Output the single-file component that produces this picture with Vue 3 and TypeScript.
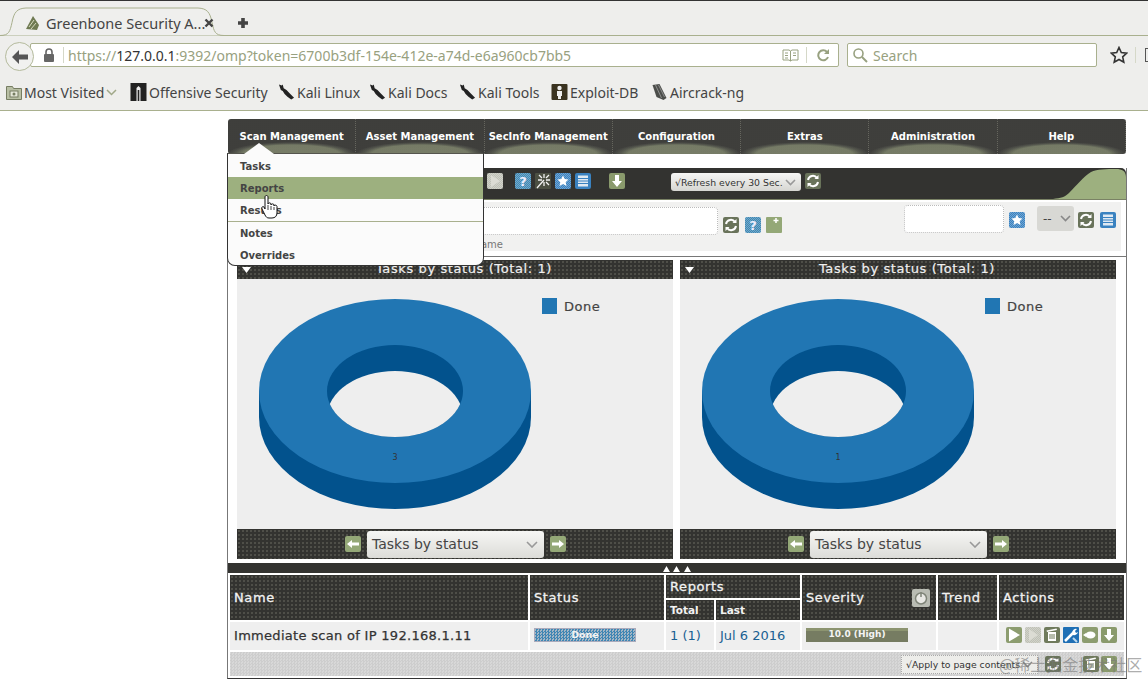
<script setup lang="ts">
const menu = ['Scan Management', 'Asset Management', 'SecInfo Management', 'Configuration', 'Extras', 'Administration', 'Help']
const rowIcons = ['play', 'off', 'trash', 'wrench', 'note', 'down']
const panels = [{ label: '3' }, { label: '1' }]
const marks = [
  { icon: 'off-sec', text: 'Offensive Security', cls: 'm-off' },
  { icon: 'kali', text: 'Kali Linux', cls: 'm-linux' },
  { icon: 'kali', text: 'Kali Docs', cls: 'm-docs' },
  { icon: 'kali', text: 'Kali Tools', cls: 'm-tools' },
  { icon: 'edb', text: 'Exploit-DB', cls: 'm-edb' },
  { icon: 'air', text: 'Aircrack-ng', cls: 'm-air' },
]
</script>

<template>
  <div class="screen">
    <svg class="defs" width="0" height="0">
      <defs>
        <clipPath id="holeClip"><ellipse cx="136" cy="92" rx="68" ry="46" /></clipPath>
        <pattern id="ditherW" width="2" height="2" patternUnits="userSpaceOnUse"><rect width="1" height="1" fill="#fff" fill-opacity=".28" /><rect x="1" y="1" width="1" height="1" fill="#fff" fill-opacity=".28" /></pattern>
        <symbol id="i-refresh" viewBox="0 0 16 16"><rect width="16" height="16" rx="2" fill="#69735a" /><path d="M3 7a5 5 0 0 1 9-2M13 9a5 5 0 0 1-9 2" fill="none" stroke="#fff" stroke-width="2" /><path d="M13.500 2v4h-4zM2.500 14v-4h4z" fill="#fff" /></symbol>
        <symbol id="i-help" viewBox="0 0 16 16"><rect width="16" height="16" rx="2" fill="#3f88b4" /><rect width="16" height="16" rx="2" fill="url(#ditherW)" /><text x="8" y="13" font-size="13" font-weight="700" text-anchor="middle" fill="#eef" font-family="DejaVu Sans">?</text></symbol>
        <symbol id="i-wand" viewBox="0 0 16 16"><rect width="16" height="16" rx="1" fill="#4b4f42" /><path d="M2 15 9 7M9 1v4M9 9v4M3 7h4M11 7h4M4 2l3 3M14 2l-3 3M14 12l-3-3" stroke="#f2f2f2" stroke-width="1.300" /></symbol>
        <symbol id="i-star" viewBox="0 0 16 16"><rect width="16" height="16" rx="2" fill="#3a82c0" /><rect width="16" height="16" rx="2" fill="url(#ditherW)" /><path d="m8 2.500 1.700 3.600 3.800.5-2.800 2.600.8 3.800L8 11l-3.500 2 .8-3.800-2.800-2.600 3.800-.5z" fill="#fff" /></symbol>
        <symbol id="i-list" viewBox="0 0 16 16"><rect width="16" height="16" rx="2" fill="#3a82c0" /><rect x="3" y="2.500" width="10" height="11" fill="#dfe9f2" /><path d="M3 5.500h10M3 8h10M3 10.500h10" stroke="#3a82c0" /></symbol>
        <symbol id="i-down" viewBox="0 0 16 16"><rect width="16" height="16" rx="2" fill="#8a9a6c" /><path d="M6 2h4v6h3l-5 6-5-6h3z" fill="#fff" /></symbol>
        <symbol id="i-add" viewBox="0 0 16 16"><rect width="16" height="16" rx="1" fill="#94a877" /><path d="M10 1v5M7.500 3.500h5" stroke="#fff" stroke-width="1.500" /></symbol>
        <symbol id="i-left" viewBox="0 0 16 16"><rect width="16" height="16" rx="2" fill="#94a877" /><path d="M2 8l5-4v2.500h7v3H7V12z" fill="#fff" /></symbol>
        <symbol id="i-right" viewBox="0 0 16 16"><rect width="16" height="16" rx="2" fill="#94a877" /><path d="M14 8 9 4v2.500H2v3h7V12z" fill="#fff" /></symbol>
        <symbol id="i-play" viewBox="0 0 16 16"><rect width="16" height="16" rx="2" fill="#8c9c6f" /><path d="M3 1.500 14 8 3 14.500z" fill="#fff" /></symbol>
        <symbol id="i-off" viewBox="0 0 16 16"><rect width="16" height="16" rx="2" fill="#bfc1b6" /><rect width="16" height="16" rx="2" fill="url(#ditherW)" /><path d="M4 2 13 8 4 14z" fill="#dcdcd4" /></symbol>
        <symbol id="i-trash" viewBox="0 0 16 16"><rect width="16" height="16" rx="2" fill="#6f7a5c" /><path d="M4 5h8v9H4zM2.500 3.500l10-2 .5 1.500-10 2z" fill="#fff" /><path d="M6 7v5M8 7v5M10 7v5" stroke="#6f7a5c" /></symbol>
        <symbol id="i-wrench" viewBox="0 0 16 16"><rect width="16" height="16" rx="1" fill="#1f6fb5" /><path d="M2 14 10 6" stroke="#fff" stroke-width="2.500" /><path d="M9 6a4 4 0 0 1 5-4l-2 2 1 2 2-1a4 4 0 0 1-5 3z" fill="#fff" /><path d="M10 11l4 4" stroke="#bcd8ee" stroke-width="2" /></symbol>
        <symbol id="i-note" viewBox="0 0 16 16"><rect width="16" height="16" rx="2" fill="#8c9c6f" /><ellipse cx="8.500" cy="8" rx="5" ry="3.500" fill="#fff" /><path d="M1 8l3-2v4z" fill="#fff" /></symbol>
        <symbol id="i-power" viewBox="0 0 18 18"><rect width="18" height="18" rx="2" fill="#b9bcb3" /><circle cx="9" cy="9.500" r="5.500" fill="#e8e8e4" stroke="#7f8478" stroke-width="1.500" /><path d="M9 3v5" stroke="#7f8478" stroke-width="1.500" /></symbol>
        <symbol id="i-kali" viewBox="0 0 18 18"><path d="M1 1l3 1 1-1 1 4 3 2 3 3 5 5-3 2-4-3-3-3-2-3-2-1-1-3z" fill="#222" /></symbol>
        <symbol id="i-off-sec" viewBox="0 0 16 18"><rect width="16" height="18" fill="#222" /><path d="M6 18V5l2-2 2 2v13h-1.200V7H7.200v11z" fill="#eee" /></symbol>
        <symbol id="i-edb" viewBox="0 0 16 18"><rect y="1" width="16" height="16" rx="1" fill="#3a3320" /><circle cx="8" cy="5" r="2.200" fill="#eee" /><path d="M5.500 8h5v5h-1v3h-3v-3h-1z" fill="#eee" /></symbol>
        <symbol id="i-air" viewBox="0 0 16 18"><path d="M1 2 8 1l7 14-3 2-7-3z" fill="#4b4d4a" /><path d="M4 2l6 13M7 2l6 12" stroke="#aaa" stroke-width=".7" /></symbol>
      </defs>
    </svg>

    <header class="chrome">
      <div class="tabs">
        <div class="tab">
          <svg class="tab-shape" width="236" height="29" viewBox="0 0 236 29"><path d="M0 28.500c9 0 10-4 12-13C14 5 17 1.500 26 1h172c9 .5 12 4 14 14.500 2 9 3 13 12 13h12" fill="#efefed" stroke="#a9b08e" /></svg>
          <svg class="favicon" width="16" height="16" viewBox="0 0 16 16"><path d="M1 14 8 1l6 9-2 5z" fill="#6f7a52" /><path d="M4 12 9 5M6 14l5-6" stroke="#d8dcc0" /></svg>
          <span class="tab-title">Greenbone Security A...</span>
          <svg class="close" width="10" height="10" viewBox="0 0 10 10"><path d="M1.500 1.500l7 7M8.500 1.500l-7 7" stroke="#444" stroke-width="2.400" /></svg>
        </div>
        <svg class="plus" width="12" height="12" viewBox="0 0 12 12"><path d="M6 1v10M1 6h10" stroke="#444" stroke-width="3.600" /></svg>
      </div>
      <div class="nav">
        <div class="back"><svg width="18" height="16" viewBox="0 0 18 16"><path d="M8 1 1 8l7 7v-4.500h9v-5H8z" fill="#555" /></svg></div>
        <div class="url">
          <svg class="lock" width="12" height="14" viewBox="0 0 12 14"><path d="M3 6V4a3 3 0 0 1 6 0v2" fill="none" stroke="#666" stroke-width="1.600" /><rect x="1" y="6" width="10" height="8" rx="1" fill="#666" /></svg>
          <i class="vsep"></i>
          <span class="url-text">https://<b>127.0.0.1</b>:9392/omp?token=6700b3df-154e-412e-a74d-e6a960cb7bb5</span>
          <svg class="reader" width="17" height="13" viewBox="0 0 17 13"><path d="M1 1h6l1.500 1L10 1h6v10h-6l-1.500 1L7 11H1zM8.500 2v10M3 4h3M3 6.500h3M3 9h3M11 4h3M11 6.500h3" fill="none" stroke="#98a180" /></svg>
          <i class="vsep r"></i>
          <svg class="reload" width="14" height="14" viewBox="0 0 14 14"><path d="M11 9a5 5 0 1 1-1-5" fill="none" stroke="#98a180" stroke-width="2" /><path d="M12 1v5H7z" fill="#98a180" /></svg>
        </div>
        <div class="search">
          <svg width="16" height="16" viewBox="0 0 16 16"><circle cx="6.500" cy="6.500" r="4.500" fill="none" stroke="#98a180" stroke-width="1.600" /><path d="m10 10 5 5" stroke="#98a180" stroke-width="2" /></svg>
          <span>Search</span>
        </div>
        <svg class="bstar" width="18" height="18" viewBox="0 0 18 18"><path d="m9 1.500 2.300 5 5.400.6-4 3.700 1.100 5.400L9 13.500l-4.800 2.700 1.100-5.400-4-3.700 5.400-.6z" fill="none" stroke="#333" stroke-width="1.600" /></svg>
        <i class="vsep end"></i>
        <i class="cut"></i>
      </div>
      <div class="marks">
        <div class="mark m-folder">
          <svg width="16" height="16" viewBox="0 0 16 16"><path d="M.5 2.500h6l1 2h8v11H.500z" fill="#b8bfa4" stroke="#767d62" /><rect x="4" y="7" width="8" height="6" fill="#e4e6d8" stroke="#767d62" /><circle cx="8" cy="10" r="1.500" fill="#767d62" /></svg>
          <span>Most Visited</span>
          <svg width="11" height="7" viewBox="0 0 11 7"><path d="m1 1 4.500 4.500L10 1" fill="none" stroke="#a0a888" stroke-width="1.500" /></svg>
        </div>
        <div v-for="m in marks" :key="m.text" class="mark" :class="m.cls">
          <svg class="mi" width="17" height="18"><use :href="'#i-' + m.icon" /></svg>
          <span>{{ m.text }}</span>
        </div>
      </div>
    </header>

    <main class="page">
      <nav class="menu">
        <div v-for="item in menu" :key="item" class="menu-item">{{ item }}</div>
      </nav>

      <div class="content">
        <div class="toolbar">
          <svg class="swoosh" width="73" height="31" viewBox="0 0 73 31"><path d="M0 31c8-1 12-2 16-6 8-8 14-16 22-21 6-3 16-3 25-3 6 0 10 2 10 8v22z" fill="#9db07f" /></svg>
          <svg class="ic"><use href="#i-off" /></svg>
          <svg class="ic sp1"><use href="#i-help" /></svg>
          <svg class="ic sp2"><use href="#i-wand" /></svg>
          <svg class="ic sp2"><use href="#i-star" /></svg>
          <svg class="ic sp2"><use href="#i-list" /></svg>
          <svg class="ic sp3"><use href="#i-down" /></svg>
          <div class="sel refresh">√Refresh every 30 Sec.<svg width="11" height="7" viewBox="0 0 11 7"><path d="m1 1 4.500 4.500L10 1" fill="none" stroke="#999" stroke-width="1.600" /></svg></div>
          <svg class="ic sp2"><use href="#i-refresh" /></svg>
        </div>

        <div class="filters">
          <div class="filter-main">
            <div class="inp wide"></div>
            <svg class="ic low"><use href="#i-refresh" /></svg>
            <svg class="ic low g6"><use href="#i-help" /></svg>
            <svg class="ic low g5"><use href="#i-add" /></svg>
            <div class="inp narrow"></div>
            <svg class="ic mid"><use href="#i-star" /></svg>
            <div class="sel dash">--<svg width="11" height="7" viewBox="0 0 11 7"><path d="m1 1 4.500 4.500L10 1" fill="none" stroke="#888" stroke-width="1.600" /></svg></div>
            <svg class="ic mid"><use href="#i-refresh" /></svg>
            <svg class="ic mid g6"><use href="#i-list" /></svg>
          </div>
          <div class="filter-note">Filter name</div>
        </div>

        <section class="dash-row">
          <article v-for="(p, i) in panels" :key="i" class="panel">
            <div class="panel-head dots">
              <svg class="tri" width="9" height="6" viewBox="0 0 9 6"><path d="M0 0h9L4.500 6z" fill="#fff" /></svg>
              Tasks by status (Total: 1)
            </div>
            <div class="panel-body">
              <svg class="donut" width="272" height="210" viewBox="0 0 272 210">
                <path d="M0 92v26a136 92 0 0 0 272 0V92z" fill="#02528d" />
                <ellipse cx="136" cy="92" rx="136" ry="92" fill="#2176b3" />
                <ellipse cx="136" cy="92" rx="68" ry="46" fill="#02528d" />
                <ellipse cx="136" cy="118" rx="68" ry="46" fill="#eeeeee" clip-path="url(#holeClip)" />
                <text x="136" y="161" font-size="8" text-anchor="middle" fill="#333" font-family="DejaVu Sans">{{ p.label }}</text>
              </svg>
              <div class="legend"><i></i>Done</div>
            </div>
            <div class="panel-foot dots">
              <svg class="ic"><use href="#i-left" /></svg>
              <div class="sel big">Tasks by status<svg width="12" height="7" viewBox="0 0 12 7"><path d="m1 1 5 5 5-5" fill="none" stroke="#999" stroke-width="1.600" /></svg></div>
              <svg class="ic"><use href="#i-right" /></svg>
            </div>
          </article>
        </section>

        <div class="splitter">
          <svg width="28" height="6" viewBox="0 0 28 6"><path d="M0 6l3.500-6L7 6zM10 6l3.500-6L17 6zM21 6l3.500-6L28 6z" fill="#fff" /></svg>
        </div>

        <table class="tasks">
          <colgroup>
            <col class="c-name" /><col class="c-status" /><col class="c-total" /><col class="c-last" /><col class="c-sev" /><col class="c-trend" /><col class="c-act" />
          </colgroup>
          <thead>
            <tr class="h1">
              <th rowspan="2" class="dots">Name</th>
              <th rowspan="2" class="dots">Status</th>
              <th colspan="2" class="dots">Reports</th>
              <th rowspan="2" class="dots"><div class="sev-head"><span>Severity</span><svg class="ic18"><use href="#i-power" /></svg></div></th>
              <th rowspan="2" class="dots">Trend</th>
              <th rowspan="2" class="dots">Actions</th>
            </tr>
            <tr class="h2">
              <th class="dots small">Total</th>
              <th class="dots small">Last</th>
            </tr>
          </thead>
          <tbody>
            <tr class="row">
              <td class="name">Immediate scan of IP 192.168.1.11</td>
              <td><div class="bar done">Done</div></td>
              <td class="link">1 (1)</td>
              <td class="link">Jul 6 2016</td>
              <td><div class="bar high">10.0 (High)</div></td>
              <td></td>
              <td><div class="acts"><svg v-for="n in rowIcons" :key="n" class="ic"><use :href="'#i-' + n" /></svg></div></td>
            </tr>
            <tr class="foot">
              <td colspan="7">
                <div class="foot-in">
                  <div class="sel apply">√Apply to page contents<svg width="11" height="7" viewBox="0 0 11 7"><path d="m1 1 4.500 4.500L10 1" fill="none" stroke="#888" stroke-width="1.600" /></svg></div>
                  <svg class="ic"><use href="#i-refresh" /></svg>
                  <svg class="ic gap-l"><use href="#i-trash" /></svg>
                  <svg class="ic"><use href="#i-down" /></svg>
                </div>
              </td>
            </tr>
          </tbody>
        </table>
      </div>

      <div class="drop">
        <svg class="bump" width="30" height="11" viewBox="0 0 30 11"><path d="M0 11 15 0l15 11z" fill="#fbfbfb" /></svg>
        <div class="drop-item">Tasks</div>
        <div class="drop-item on">Reports</div>
        <div class="drop-item">Results</div>
        <div class="drop-item ruled">Notes</div>
        <div class="drop-item">Overrides</div>
      </div>
      <svg class="hand" width="18" height="24" viewBox="0 0 18 24">
        <path d="M4 2c0-2 3-2 3 0v7c0-1.500 3-1.500 3 0v1c0-1.500 3-1.500 3 0v1c0-1.500 3-1 3 .5V18c0 3-2 5-5 5H8c-2 0-3-1-4-3l-3-6c-1-2 1-3 2-2l1 2z" fill="#fff" stroke="#111" stroke-width="1" />
        <path d="M7 10v5M10 11v4M13 12v3" stroke="#111" stroke-width=".8" />
      </svg>
    </main>

    <div class="watermark">@稀土掘金技术社区</div>
  </div>
</template>

<style scoped>
.screen {
  position: relative;
  width: 1148px;
  height: 679px;
  overflow: hidden;
  background: #fff;
  font-family: "DejaVu Sans", sans-serif;
}
.defs { position: absolute; }
.chrome {
  height: 111px;
  box-sizing: border-box;
  background: #eeeeec;
  border-top: 1px solid #333;
  border-bottom: 1px solid #a9b08e;
  font-family: "Noto Sans", sans-serif;
  color: #444;
}
.tabs {
  height: 35px;
  box-sizing: border-box;
  border-bottom: 1px solid #a9b08e;
  display: flex;
  align-items: center;
}
.tab {
  position: relative;
  width: 236px;
  height: 34px;
  display: flex;
  align-items: center;
  padding-top: 9px;
  box-sizing: border-box;
}
.tab-shape { position: absolute; left: 0; bottom: -1px; }
.favicon { position: relative; margin-left: 25px; }
.tab-title {
  position: relative;
  margin-left: 5px;
  width: 158px;
  font-size: 14.5px;
  color: #444;
  white-space: nowrap;
}
.close { position: relative; }
.plus { margin-left: 1px; margin-top: 9px; }
.nav {
  height: 38px;
  position: relative;
  display: flex;
  align-items: center;
  padding-left: 30px;
}
.nav > * { flex: none; }
.back {
  position: absolute;
  left: 5px;
  top: 6px;
  width: 27px;
  height: 27px;
  border-radius: 50%;
  border: 1px solid #b4ba9c;
  background: #f1f1ef;
  display: flex;
  align-items: center;
  justify-content: center;
  z-index: 1;
}
.url {
  width: 809px;
  height: 24px;
  box-sizing: border-box;
  background: #fff;
  border: 1px solid #a9b08e;
  border-radius: 2px;
  display: flex;
  align-items: center;
  padding-left: 12px;
}
.lock { margin-right: 8px; flex: none; }
.vsep { display: block; width: 1px; height: 16px; background: #d5d8c8; flex: none; }
.url-text {
  margin-left: 4px;
  width: 714px;
  flex: none;
  font-size: 14px;
  color: #98a180;
  white-space: nowrap;
}
.url-text b { font-weight: 400; color: #333; }
.reader { flex: none; }
.vsep.r { margin: 0 10px 0 7px; }
.reload { flex: none; }
.search {
  margin-left: 8px;
  width: 250px;
  height: 24px;
  box-sizing: border-box;
  background: #fff;
  border: 1px solid #a9b08e;
  border-radius: 2px;
  display: flex;
  align-items: center;
  gap: 5px;
  padding-left: 4px;
  font-size: 14px;
  color: #98a180;
}
.bstar { margin-left: 13px; }
.vsep.end { margin-left: 7px; }
.cut { display: block; width: 6px; height: 12px; margin-left: 9px; border: 1px solid #555; border-right: 0; }
.marks {
  height: 36px;
  display: flex;
  align-items: center;
  font-size: 14px;
  color: #444;
}
.mark { display: flex; align-items: center; white-space: nowrap; }
.mark .mi { margin-right: 2px; flex: none; }
.m-folder { margin-left: 6px; gap: 2px; width: 124px; }
.m-off { width: 148px; }
.m-linux { width: 91px; }
.m-docs { width: 90px; }
.m-tools { width: 92px; }
.m-edb { width: 100px; }

.page {
  position: relative;
  padding: 8px 22px 0 227px;
}
.menu {
  margin-left: 1px;
  width: 898px;
  height: 35px;
  display: grid;
  grid-template-columns: repeat(7, 1fr);
  border-radius: 3px;
  background-color: #333330;
  overflow: hidden;
}
.menu-item {
  display: flex;
  align-items: center;
  justify-content: center;
  height: 35px;
  box-sizing: border-box;
  font-size: 10px;
  font-weight: 700;
  color: #fff;
  white-space: nowrap;
  background-image:
    radial-gradient(circle, rgba(255, 255, 255, 0.09) 0.6px, transparent 0.9px),
    radial-gradient(ellipse 64px 12px at 50% 100%, #6f755e 0, #6d735c 75%, rgba(100, 105, 88, 0.45) 88%, transparent 100%);
  background-size: 2px 2px, 100% 100%;
  border-right: 1px dotted #66665e;
}
.content {
  margin-top: 14px;
  width: 900px;
  box-sizing: border-box;
  height: 511px;
  border-left: 1px solid #777;
  border-right: 1px solid #777;
  border-bottom: 1px solid #333;
}
.toolbar {
  position: relative;
  height: 32px;
  box-sizing: border-box;
  border-radius: 0 5px 0 0;
  background: #333330;
  border-bottom: 1px solid #7a8265;
  overflow: hidden;
  display: flex;
  align-items: center;
  padding-left: 259px;
}
.swoosh { position: absolute; right: 0; top: 0; }
.ic { width: 16px; height: 16px; flex: none; display: block; }
.ic18 { width: 18px; height: 18px; flex: none; display: block; }
.sp1 { margin-left: 12px; }
.sp2 { margin-left: 4px; }
.sp3 { margin-left: 18px; margin-right: 46px; }
.toolbar .ic { margin-top: -6px; }
.sel {
  box-sizing: border-box;
  display: flex;
  align-items: center;
  justify-content: space-between;
  white-space: nowrap;
  border-radius: 3px;
  color: #333;
  background: linear-gradient(#f6f6f4, #d6d6d2);
}
.refresh {
  width: 130px;
  height: 18px;
  font-size: 9.300px;
  padding: 0 5px 0 4px;
  margin-top: -3px;
  flex: none;
}
.filters {
  height: 57px;
  box-sizing: border-box;
  padding-top: 2px;
  border-bottom: 1px solid #777;
  position: relative;
}
.filter-main {
  height: 49px;
  background: #f1f1f0;
  display: flex;
  align-items: flex-start;
  padding-top: 5px;
  box-sizing: border-box;
  margin-right: 5px;
}
.inp {
  box-sizing: border-box;
  background: #fff;
  border: 1px dotted #bbb;
  border-radius: 4px;
  height: 28px;
  flex: none;
}
.wide { width: 250px; margin-left: 240px; margin-right: 5px; }
.low { margin-top: 10px; }
.mid { margin-top: 5px; }
.g6 { margin-left: 6px; }
.g5 { margin-left: 5px; }
.narrow { width: 100px; margin-left: 122px; margin-right: 5px; margin-top: -2px; }
.dash {
  width: 37px;
  height: 25px;
  margin: -1px 4px 0 12px;
  padding: 0 3px 0 6px;
  font-size: 12px;
  background: #d8d8d4;
  color: #444;
  flex: none;
}
.filter-note {
  position: absolute;
  left: 0;
  top: 39px;
  width: 275px;
  text-align: right;
  font-size: 10px;
  color: #777;
}
.dash-row {
  display: flex;
  gap: 7px;
  padding: 3px 0 0 9px;
}
.panel { width: 436px; }
.dots {
  background-color: #333330;
  background-image: radial-gradient(circle, #5e5e56 0.6px, transparent 0.9px);
  background-size: 4px 4px;
}
.panel-head {
  position: relative;
  height: 19px;
  padding-left: 18px;
  box-sizing: border-box;
  text-align: center;
  color: #f0f0f0;
  font-size: 13px;
  font-weight: 400;
  letter-spacing: 0.6px;
  line-height: 18px;
  -webkit-text-stroke: 0.2px #f0f0f0;
}
.tri { position: absolute; left: 5px; top: 7px; }
.panel-body {
  position: relative;
  height: 250px;
  background: #eeeeee;
  display: flex;
  align-items: flex-start;
  padding: 20px 0 0 22px;
  box-sizing: border-box;
}
.donut { display: block; flex: none; }
.legend {
  margin-left: 11px;
  margin-top: -1px;
  display: flex;
  align-items: center;
  gap: 7px;
  height: 16px;
  font-size: 13px;
  font-weight: 400;
  letter-spacing: 0.5px;
  color: #444;
  -webkit-text-stroke: 0.2px #444;
}
.legend i { display: block; width: 15px; height: 16px; background: #2176b3; }
.panel-foot {
  height: 30px;
  display: flex;
  align-items: center;
  padding-left: 108px;
  gap: 6px;
}
.big {
  width: 177px;
  height: 27px;
  padding: 0 6px 0 5px;
  font-size: 14px;
  color: #444;
  background: linear-gradient(#f6f6f4, #dcdcd8);
}
.splitter {
  margin-top: 4px;
  height: 10px;
  background: #333330;
  display: flex;
  justify-content: center;
  align-items: flex-end;
  padding-bottom: 1px;
  box-sizing: border-box;
}
.tasks {
  table-layout: fixed;
  width: 898px;
  border-collapse: separate;
  border-spacing: 2px;
  font-size: 13px;
  color: #333;
}
.c-name { width: 298px; }
.c-status { width: 134px; }
.c-total { width: 48px; }
.c-last { width: 84px; }
.c-sev { width: 134px; }
.c-trend { width: 59px; }
.c-act { width: 125px; }
.tasks th {
  color: #f2f2f2;
  text-align: left;
  padding: 0 0 0 4px;
  font-size: 13px;
  font-weight: 400;
  letter-spacing: 0.6px;
  -webkit-text-stroke: 0.3px #f2f2f2;
}
.h1 th { height: 23px; }
.h2 th { height: 20px; }
.tasks th.small { font-size: 10.500px; font-weight: 700; padding-left: 4px; letter-spacing: 0; -webkit-text-stroke: 0; }
.sev-head { display: flex; align-items: center; justify-content: space-between; padding-right: 6px; }
.row td { height: 28px; background: #efefef; padding: 0 0 2px 4px; box-sizing: border-box; }
.name { font-weight: 400; letter-spacing: 0.3px; -webkit-text-stroke: 0.25px #333; white-space: nowrap; }
.link { color: #1a5f92; letter-spacing: 0; white-space: nowrap; }
.bar {
  width: 102px;
  height: 14px;
  box-sizing: border-box;
  text-align: center;
  font-size: 9.500px;
  line-height: 12px;
  font-weight: 700;
  color: #f4f4f4;
}
.done {
  background-color: #5f9cc0;
  background-image: conic-gradient(#3f86b4 25%, #a4b6c4 0 50%, #3f86b4 0 75%, #a4b6c4 0);
  background-size: 3px 3px;
  border: 1px solid #aab;
}
.high { background: linear-gradient(#8c9470 0 3px, #767c62 3px); font-size: 9px; }
.acts { display: flex; gap: 3px; padding-left: 3px; }
.foot td {
  height: 24px;
  padding: 0;
  background-color: #d2d2d2;
  background-image: conic-gradient(#cdcdcd 25%, #d8d8d8 0 50%, #cdcdcd 0 75%, #d8d8d8 0);
  background-size: 3px 3px;
}
.foot-in {
  display: flex;
  align-items: center;
  padding-left: 671px;
  height: 24px;
}
.apply {
  width: 137px;
  height: 19px;
  flex: none;
  padding: 0 4px;
  font-size: 9.300px;
  background: #ededea;
  border: 1px dotted #aaa;
  border-radius: 0;
  margin-right: 7px;
}
.gap-l { margin-left: 22px; margin-right: 2px; }

.drop {
  position: absolute;
  left: 227px;
  top: 42px;
  width: 257px;
  height: 113px;
  box-sizing: border-box;
  background: #fbfbfb;
  border: 1px solid #333;
  border-top-color: #55554e;
  border-radius: 0 0 8px 8px;
  padding-top: 1px;
}
.bump { position: absolute; left: 16px; top: -11px; }
.drop-item {
  height: 22px;
  line-height: 24px;
  padding-left: 12px;
  font-size: 10px;
  font-weight: 700;
  color: #444;
}
.drop-item.on { background: #9db07f; }
.ruled { border-top: 1px solid #a9b08e; }
.hand { position: absolute; left: 261px; top: 84px; }
.watermark {
  position: absolute;
  left: 999px;
  top: 652px;
  font-family: "Noto Sans CJK SC", sans-serif;
  font-size: 16px;
  color: rgba(120, 120, 120, 0.62);
  white-space: nowrap;
}
</style>
